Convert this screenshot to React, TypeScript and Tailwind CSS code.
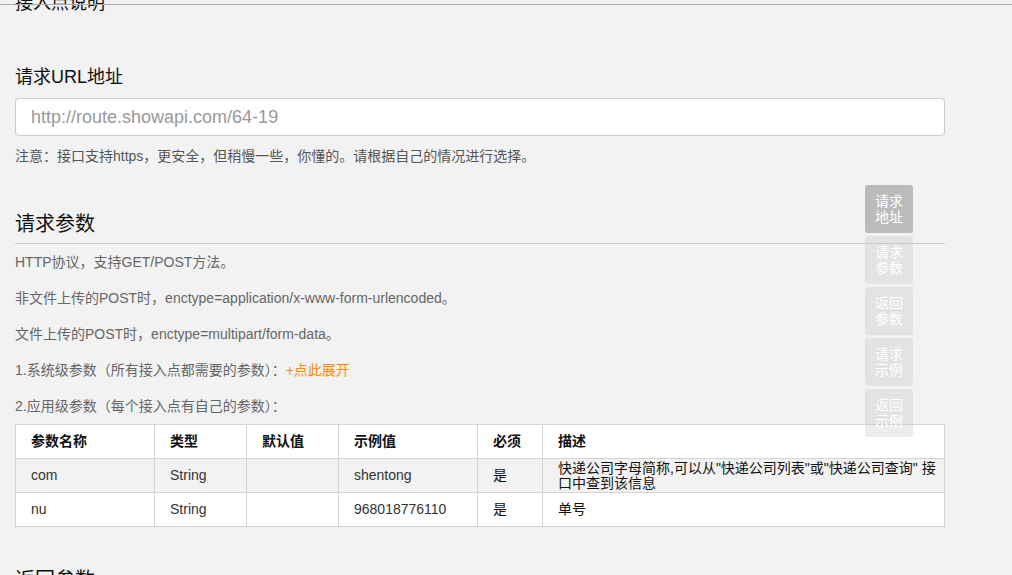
import React from 'react';

const params = [
  { name: 'com', type: 'String', def: '', example: 'shentong', required: '是', desc: '快递公司字母简称,可以从"快递公司列表"或"快递公司查询" 接口中查到该信息' },
  { name: 'nu', type: 'String', def: '', example: '968018776110', required: '是', desc: '单号' },
];

const navItems = [
  ['请求', '地址'],
  ['请求', '参数'],
  ['返回', '参数'],
  ['请求', '示例'],
  ['返回', '示例'],
];

export default function App() {
  return (
    <div
      className="relative h-[575px] w-full overflow-hidden bg-[#f2f2f2]"
      style={{ fontFamily: '"Liberation Sans", Arial, "Noto Sans CJK SC", sans-serif' }}
    >
      {/* line of the fixed header above the page */}
      <div className="absolute left-0 right-0 top-[4px] h-px bg-[#aaaaaa]" />

      <div className="w-[945px] pl-[15px]">
        <h2 className="mt-[-9px] text-[18px] leading-[24px] text-[#111]">接入点说明</h2>

        <h3 className="mt-[50px] text-[18px] leading-[24px] text-[#111]">请求URL地址</h3>
        <input
          readOnly
          placeholder="http://route.showapi.com/64-19"
          className="mt-[9px] block h-[38px] w-full rounded-[4px] border border-[#cccccc] bg-white px-[15px] text-[18px] text-[#333] placeholder:text-[#999] outline-none"
        />
        <p className="mt-[10px] text-[14px] leading-[20px] text-[#555]">
          注意：接口支持https，更安全，但稍慢一些，你懂的。请根据自己的情况进行选择。
        </p>

        <h3 className="mt-[43px] border-b border-[#cccccc] pb-[4px] text-[20px] leading-[30px] text-[#111]">
          请求参数
        </h3>

        <div className="mt-[8px] flex flex-col gap-[16px] text-[14px] leading-[20px] text-[#666]">
          <p>HTTP协议，支持GET/POST方法。</p>
          <p>非文件上传的POST时，enctype=application/x-www-form-urlencoded。</p>
          <p>文件上传的POST时，enctype=multipart/form-data。</p>
          <p>
            1.系统级参数（所有接入点都需要的参数）：<span className="text-[#ff8c00]">+点此展开</span>
          </p>
          <p>2.应用级参数（每个接入点有自己的参数）：</p>
        </div>

        <table className="mt-[8px] w-full table-fixed border-collapse bg-white text-left">
          <colgroup>
            <col className="w-[139px]" />
            <col className="w-[92px]" />
            <col className="w-[92px]" />
            <col className="w-[139px]" />
            <col className="w-[65px]" />
            <col />
          </colgroup>
          <thead>
            <tr className="h-[34px] text-[14px] font-bold text-[#111]">
              {['参数名称', '类型', '默认值', '示例值', '必须', '描述'].map((h) => (
                <th key={h} className="border border-[#d4d4d4] px-[15px] py-0 font-bold">
                  {h}
                </th>
              ))}
            </tr>
          </thead>
          <tbody className="text-[14px] text-[#333]">
            {params.map((p, i) => (
              <tr key={p.name} className={`h-[34px] ${i === 0 ? 'bg-[#f2f2f2]' : 'bg-white'}`}>
                <td className="border border-[#d4d4d4] px-[15px] py-0">{p.name}</td>
                <td className="border border-[#d4d4d4] px-[15px] py-0">{p.type}</td>
                <td className="border border-[#d4d4d4] px-[15px] py-0">{p.def}</td>
                <td className="border border-[#d4d4d4] px-[15px] py-0">{p.example}</td>
                <td className="border border-[#d4d4d4] px-[15px] py-0 text-[#111]">{p.required}</td>
                <td className="border border-[#d4d4d4] py-0 pl-[15px] pr-[6px] leading-[15px] text-[#111]">
                  {p.desc}
                </td>
              </tr>
            ))}
          </tbody>
        </table>

        <h3 className="mt-[38px] text-[20px] leading-[30px] text-[#111]">返回参数</h3>
      </div>

      {/* floating section nav */}
      <div className="absolute left-[865px] top-[185px] flex flex-col gap-[3px]">
        {navItems.map(([a, b], i) => (
          <div
            key={i}
            className={`flex h-[48px] w-[48px] flex-col items-center justify-center rounded-[3px] text-[14px] leading-[16px] text-white ${
              i === 0 ? 'bg-[#bbbbbb]' : 'bg-[rgba(187,187,187,0.27)]'
            }`}
          >
            <span>{a}</span>
            <span>{b}</span>
          </div>
        ))}
      </div>
    </div>
  );
}
